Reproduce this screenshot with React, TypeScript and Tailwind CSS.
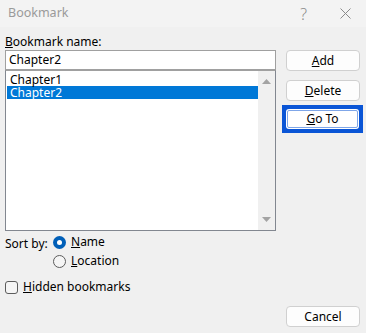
import React, { useState } from 'react';

const font = { fontFamily: '"Noto Sans", "Segoe UI", sans-serif' };

function DlgButton({
  children,
  focused,
}: {
  children: React.ReactNode;
  focused?: boolean;
}) {
  if (focused) {
    return (
      <div className="h-[28px] w-[81px] -ml-[4px] bg-[#0a55d6] p-[4px]">
        <button className="h-full w-full bg-white text-[12px] leading-none text-black rounded-[3px] outline outline-1 -outline-offset-2 outline-[#7fa6e8]">
          {children}
        </button>
      </div>
    );
  }
  return (
    <button className="h-[21px] w-[74px] rounded-[4px] border border-[#d0d0d0] bg-[#fdfdfd] text-[12px] leading-none text-black">
      {children}
    </button>
  );
}

function Radio({ checked, children }: { checked?: boolean; children: React.ReactNode }) {
  return (
    <div className="flex items-center gap-[5px]">
      {checked ? (
        <span className="flex h-[13px] w-[13px] items-center justify-center rounded-full bg-[#005fb8]">
          <span className="h-[5px] w-[5px] rounded-full bg-white" />
        </span>
      ) : (
        <span className="h-[13px] w-[13px] rounded-full border border-[#5c5c5c] bg-[#f5f5f5]" />
      )}
      <span>{children}</span>
    </div>
  );
}

export default function App() {
  const [name] = useState('Chapter2');
  const items = ['Chapter1', 'Chapter2'];
  const selected = 1;

  return (
    <div className="w-[366px] h-[333px] bg-[#f0f0f0] text-[12px] text-black overflow-hidden" style={font}>
      {/* Title bar */}
      <div className="h-[27px] bg-[#f3f3f3] flex items-center pl-[8px]">
        <span className="text-[12.5px] text-[#9a9a9a]">Bookmark</span>
        <span className="ml-auto mr-[33px] text-[16px] font-light text-[#8a8a8a]">?</span>
        <svg width="11" height="11" viewBox="0 0 11 11" className="mr-[15px]">
          <path d="M0.5 0.5 L10.5 10.5 M10.5 0.5 L0.5 10.5" stroke="#8a8a8a" strokeWidth="1" />
        </svg>
      </div>

      {/* Body */}
      <div className="flex h-[306px] pl-[5px] pb-[6px]">
        {/* Left column */}
        <div className="w-[271px] flex flex-col">
          <div className="h-[23px] pt-[7px] leading-[15px]">
            <u>B</u>ookmark name:
          </div>
          <div className="h-[20px] border border-[#a0a0a0] bg-white pl-[3px] flex items-center">
            {name}
          </div>
          <div className="h-[161px] border border-[#828790] border-t-[#a0a0a0] bg-white flex">
            <div className="flex-1 pt-[2px] pl-[1px]">
              {items.map((it, i) => (
                <div
                  key={it}
                  className={
                    'h-[13px] leading-[13px] pl-[3px] ' +
                    (i === selected ? 'bg-[#0078d7] text-white' : '')
                  }
                >
                  {it}
                </div>
              ))}
            </div>
            <div className="w-[17px] bg-[#f0f0f0] flex flex-col items-center justify-between py-[8px]">
              <svg width="9" height="5" viewBox="0 0 9 5">
                <path d="M0 5 L4.5 0 L9 5 Z" fill="#a3a3a3" />
              </svg>
              <svg width="9" height="5" viewBox="0 0 9 5">
                <path d="M0 0 L4.5 5 L9 0 Z" fill="#a3a3a3" />
              </svg>
            </div>
          </div>

          <div className="flex mt-[3px]">
            <div className="w-[48px] pt-[1px]">Sort by:</div>
            <div className="flex flex-col gap-[3px]">
              <div className="h-[16px] flex items-center">
                <Radio checked>
                  <u>N</u>ame
                </Radio>
              </div>
              <div className="h-[16px] flex items-center">
                <Radio>
                  <u>L</u>ocation
                </Radio>
              </div>
            </div>
          </div>

          <div className="flex items-center gap-[5px] mt-[10px] h-[16px]">
            <span className="h-[13px] w-[13px] rounded-[3px] border border-[#5c5c5c] bg-[#f5f5f5]" />
            <span>
              <u>H</u>idden bookmarks
            </span>
          </div>
        </div>

        {/* Right column */}
        <div className="ml-[10px] w-[74px] flex flex-col pt-[23px]">
          <DlgButton>
            <u>A</u>dd
          </DlgButton>
          <div className="h-[9px]" />
          <DlgButton>
            <u>D</u>elete
          </DlgButton>
          <div className="h-[4px]" />
          <DlgButton focused>
            <u>G</u>o To
          </DlgButton>
          <div className="mt-auto">
            <DlgButton>Cancel</DlgButton>
          </div>
        </div>
      </div>
    </div>
  );
}
